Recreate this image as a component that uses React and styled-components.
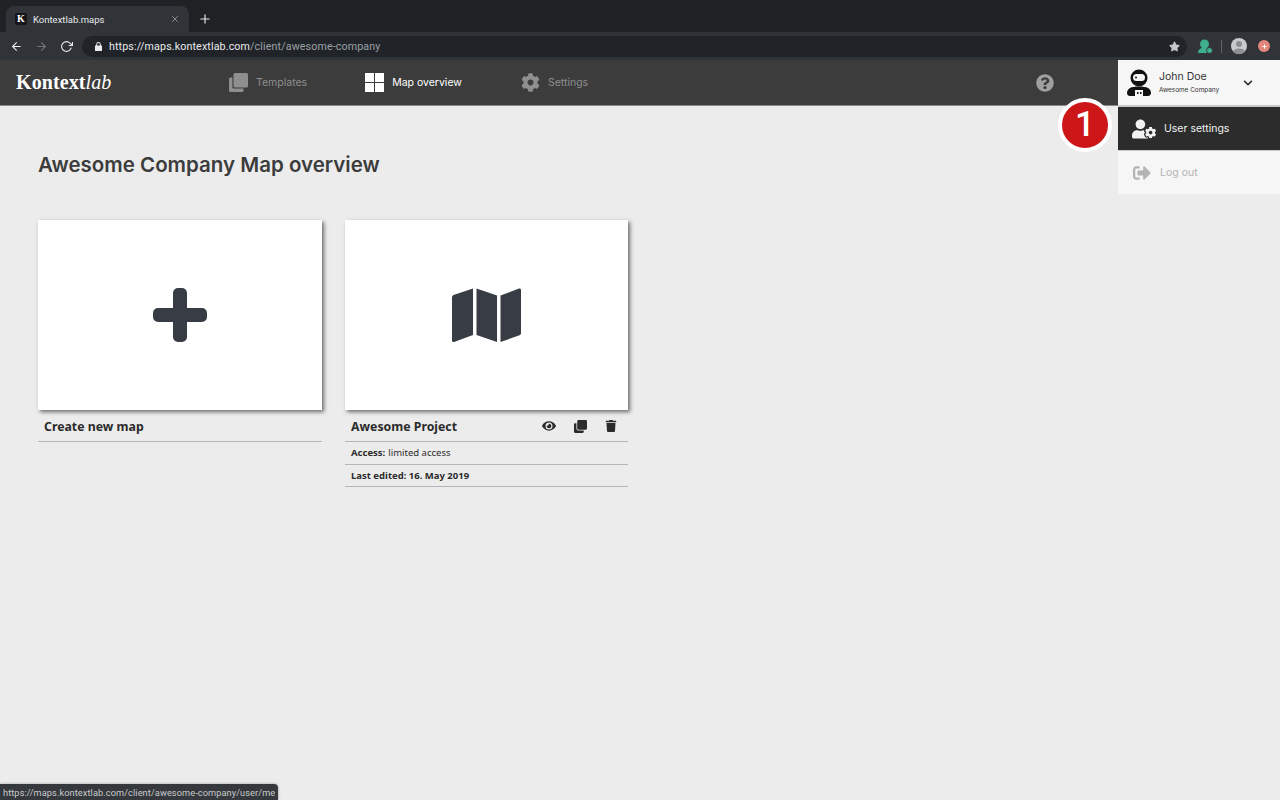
import React from 'react';
import styled, { createGlobalStyle } from 'styled-components';
import { FaCog, FaQuestionCircle, FaEye, FaTrash, FaUserCog, FaSignOutAlt, FaChevronDown, FaClone, FaStar, FaPlus } from 'react-icons/fa';
import { FiArrowLeft, FiArrowRight, FiRotateCw, FiPlus, FiX } from 'react-icons/fi';

const Global = createGlobalStyle`
  html, body {
    margin: 0;
    height: 100%;
    overflow: hidden;
    background: #ececec;
    font-family: Inter, Roboto, sans-serif;
  }
  #root { height: 100%; }
`;

const Page = styled.div`
  position: relative;
  width: 1280px;
  height: 800px;
  overflow: hidden;
  display: flex;
  flex-direction: column;
`;

const TabStrip = styled.div`
  height: 32px;
  background: #202124;
  display: flex;
  align-items: flex-end;
  padding-left: 6px;
  box-sizing: border-box;
`;

const Tab = styled.div`
  width: 183px;
  height: 26px;
  background: #303438;
  border-radius: 8px 8px 0 0;
  display: flex;
  align-items: center;
  padding: 0 9px;
  box-sizing: border-box;
  color: #e8eaed;
  font-size: 9px;
  font-family: Roboto, sans-serif;
`;

const Favicon = styled.span`
  width: 12px;
  height: 12px;
  border-radius: 2px;
  background: #15151a;
  color: #fff;
  font: bold 10px/12px "Liberation Serif", serif;
  text-align: center;
  margin-right: 6px;
`;

const TabTitle = styled.span`
  flex: 1;
  font-size: 9.5px;
`;

const NewTab = styled.div`
  color: #e8eaed;
  display: flex;
  align-items: center;
  height: 26px;
  margin-left: 9px;
  font-size: 13px;
`;

const Toolbar = styled.div`
  height: 28px;
  background: #303438;
  display: flex;
  align-items: center;
  box-sizing: border-box;
  padding-left: 10px;
  color: #e8eaed;
`;

const NavButton = styled.span`
  display: flex;
  width: 25px;
  font-size: 13px;
  color: ${(props) => (props.dim ? '#70757a' : '#e8eaed')};
`;

const AddressBar = styled.div`
  width: 1105px;
  height: 21px;
  margin-left: -3px;
  border-radius: 11px;
  background: #202428;
  display: flex;
  align-items: center;
  padding: 0 7px 0 13px;
  box-sizing: border-box;
  font-family: Roboto, sans-serif;
  font-size: 10.7px;
  letter-spacing: 0.12px;
  color: #9aa0a6;
`;

const Lock = styled.svg`
  width: 7px;
  height: 9px;
  margin-right: 7px;
`;

const Host = styled.span`
  color: #e8eaed;
`;

const StarSlot = styled.span`
  margin-left: auto;
  display: flex;
`;

const Extensions = styled.div`
  display: flex;
  align-items: center;
  margin-left: 11px;
`;

const ExtDivider = styled.span`
  width: 1px;
  height: 13px;
  background: #5f6368;
  margin: 0 9px 0 8px;
`;

const Avatar = styled.span`
  width: 16px;
  height: 16px;
  border-radius: 50%;
  background: #c8cacc;
  display: flex;
  overflow: hidden;
`;

const UpdateDot = styled.span`
  width: 12px;
  height: 12px;
  border-radius: 50%;
  background: #e2857b;
  margin-left: 11px;
  display: flex;
  align-items: center;
  justify-content: center;
`;

const AppBar = styled.header`
  height: 46px;
  background: #3c3c3c;
  border-bottom: 1px solid #8b8b8b;
  box-sizing: border-box;
  display: flex;
  align-items: center;
  padding-left: 16px;
`;

const Logo = styled.div`
  width: 213px;
  color: #fff;
  font: bold 20px "Liberation Serif", serif;
  letter-spacing: 0.1px;
  em {
    font-weight: normal;
  }
`;

const NavItem = styled.div`
  display: flex;
  align-items: center;
  gap: 8px;
  margin-right: ${(props) => props.gap}px;
  font-size: 10.5px;
  color: ${(props) => (props.active ? '#fff' : '#8f8f8f')};
  svg {
    width: 19px;
    height: 19px;
  }
`;

const HelpIcon = styled(FaQuestionCircle)`
  width: 18px;
  height: 18px;
  color: #a0a0a0;
  margin-left: 448px;
`;

const Menu = styled.div`
  position: absolute;
  top: 60px;
  right: 0;
  width: 162px;
  display: flex;
  flex-direction: column;
`;

const MenuUser = styled.div`
  height: 45px;
  background: #f6f6f6;
  display: flex;
  align-items: center;
  padding-left: 9px;
  border-bottom: 2px solid #c9c9c9;
`;

const UserText = styled.div`
  margin-left: 8px;
  width: 84px;
  color: #333;
`;

const UserName = styled.div`
  font-size: 10.5px;
  line-height: 13px;
  margin-bottom: 3px;
`;

const UserCompany = styled.div`
  font-size: 6.4px;
  line-height: 9px;
`;

const MenuRow = styled.div`
  height: ${(props) => (props.dark ? 43 : 43)}px;
  background: ${(props) => (props.dark ? '#2c2c2c' : '#f6f6f6')};
  color: ${(props) => (props.dark ? '#f2f2f2' : '#b4b4b4')};
  border-bottom: ${(props) => (props.dark ? '1px solid #c9c9c9' : 'none')};
  display: flex;
  align-items: center;
  padding-left: ${(props) => (props.dark ? 14 : 15)}px;
  gap: ${(props) => (props.dark ? 8 : 9)}px;
  font-size: 10.5px;
`;

const Badge = styled.div`
  position: absolute;
  left: 1058px;
  top: 98px;
  width: 46px;
  height: 46px;
  border: 4px solid #fff;
  border-radius: 50%;
  background: #cc1618;
  color: #fff;
  font: 500 35px/46px Roboto, sans-serif;
  text-align: center;
`;

const Main = styled.main`
  flex: 1;
  background: #ececec;
  padding: 46px 38px 0;
`;

const Heading = styled.h1`
  margin: 0 0 43px;
  height: 25px;
  font-size: 20.5px;
  line-height: 25px;
  font-weight: 600;
  color: #3c3c3c;
`;

const Cards = styled.div`
  display: flex;
  gap: 23px;
`;

const Card = styled.section`
  width: ${(props) => props.width}px;
`;

const Tile = styled.div`
  height: 190px;
  background: #fff;
  box-shadow: 2px 2px 4px rgba(0, 0, 0, 0.55);
  display: flex;
  align-items: center;
  justify-content: center;
  color: #383c45;
`;

const CardTitle = styled.div`
  height: 31px;
  padding: 0 6px;
  box-sizing: border-box;
  border-bottom: 1px solid #b5b5b5;
  display: flex;
  align-items: center;
  font-family: "Noto Sans", sans-serif;
  font-weight: 700;
  font-size: 12.3px;
  color: #2b2b2b;
  margin-top: 1px;
`;

const CardActions = styled.div`
  margin-left: auto;
  display: flex;
  align-items: center;
  gap: 18px;
  padding-right: 5px;
  font-size: 13px;
`;

const CardMeta = styled.div`
  height: 22.5px;
  padding: 0 6px;
  box-sizing: border-box;
  border-bottom: 1px solid #b5b5b5;
  display: flex;
  align-items: center;
  font-family: "Noto Sans", sans-serif;
  font-size: 9.5px;
  color: #2b2b2b;
  b {
    margin-right: 3px;
  }
`;

const StatusBubble = styled.div`
  position: absolute;
  left: 0;
  bottom: 0;
  height: 16px;
  padding: 0 3px;
  background: #35383c;
  border-top-right-radius: 4px;
  color: #c8cbce;
  font: 9.2px/17px Roboto, sans-serif;
  letter-spacing: 0.1px;
  box-shadow: 0 0 3px rgba(0, 0, 0, 0.35);
`;

const TilesIcon = () => (
  <svg viewBox="0 0 19 19" fill="currentColor">
    <rect x="0" y="0" width="9" height="9" />
    <rect x="10" y="0" width="9" height="9" />
    <rect x="0" y="10" width="9" height="9" />
    <rect x="10" y="10" width="9" height="9" />
  </svg>
);

const PagesIcon = () => (
  <svg viewBox="0 0 19 19" fill="currentColor">
    <path d="M6 0h11.5A1.5 1.5 0 0 1 19 1.500V13a1.500 1.500 0 0 1-1.500 1.500H6A1.500 1.500 0 0 1 4.500 13V1.500A1.500 1.500 0 0 1 6 0z" />
    <path d="M3.400 4.500V14c0 .9.7 1.600 1.600 1.600h9.500v1.900A1.500 1.500 0 0 1 13 19H1.500A1.500 1.500 0 0 1 0 17.500V6a1.500 1.500 0 0 1 1.500-1.500z" />
  </svg>
);

const MapIcon = () => (
  <svg width="69" height="54" viewBox="0 0 69 54" fill="currentColor">
    <path d="M21 0.500V47L2 54c-1 .3-2-.3-2-1.500V9.500C0 8.300.6 7.400 1.500 7z" />
    <path d="M24.500 0.500L45 7.500V54L24.500 47z" />
    <path d="M48.500 7.500L67 0.500c1-.4 2 .3 2 1.500v43c0 1.100-.6 2-1.500 2.300L48.500 54z" />
  </svg>
);

const PlusIcon = () => (
  <svg width="54" height="54" viewBox="0 0 54 54" fill="currentColor">
    <path d="M20 5a5 5 0 0 1 5-5h4a5 5 0 0 1 5 5v15h15a5 5 0 0 1 5 5v4a5 5 0 0 1-5 5H34v15a5 5 0 0 1-5 5h-4a5 5 0 0 1-5-5V34H5a5 5 0 0 1-5-5v-4a5 5 0 0 1 5-5h15z" />
  </svg>
);

const AstronautIcon = () => (
  <svg width="24" height="28" viewBox="0 0 24 28">
    <circle cx="12" cy="9" r="8.500" fill="#111" />
    <rect x="6" y="5" width="12" height="7" rx="3.500" fill="#f6f6f6" />
    <circle cx="9" cy="8.500" r="1" fill="#111" />
    <path d="M3 19c3-2 15-2 18 0 2 1 3 3 3 5 0 2-1.500 3-3 3H3c-1.500 0-3-1-3-3 0-2 1-4 3-5z" fill="#111" />
    <rect x="8" y="21" width="8" height="7" fill="#f6f6f6" />
    <rect x="10" y="23" width="1.500" height="2" fill="#111" />
    <rect x="13" y="23" width="1.500" height="2" fill="#111" />
  </svg>
);

const ExtIcon = () => (
  <svg width="15" height="15" viewBox="0 0 15 15" fill="#3fae8c">
    <circle cx="6.500" cy="5" r="4.500" />
    <path d="M0 14c0-3 2-5 5-5h4v5z" />
    <circle cx="11.500" cy="11.500" r="3" stroke="#303438" />
  </svg>
);

const ProfileIcon = () => (
  <svg viewBox="0 0 16 16" width="16" height="16" fill="#fff">
    <circle cx="8" cy="6" r="3" fill="#8d8f92" />
    <ellipse cx="8" cy="14" rx="6" ry="3.500" fill="#8d8f92" />
  </svg>
);

export default function App() {
  return (
    <Page>
      <Global />
      <TabStrip>
        <Tab>
          <Favicon>K</Favicon>
          <TabTitle>Kontextlab.maps</TabTitle>
          <FiX size={10} color="#9aa0a6" />
        </Tab>
        <NewTab><FiPlus size={14} /></NewTab>
      </TabStrip>
      <Toolbar>
        <NavButton><FiArrowLeft /></NavButton>
        <NavButton dim><FiArrowRight /></NavButton>
        <NavButton><FiRotateCw /></NavButton>
        <AddressBar>
          <Lock viewBox="0 0 7 9" fill="#e8eaed">
            <path d="M1.200 3.500V2.300a2.300 2.300 0 0 1 4.600 0v1.200H7V9H0V3.500zm1 0h2.600V2.300a1.300 1.300 0 0 0-2.600 0z" />
          </Lock>
          <span><Host>https://maps.kontextlab.com</Host>/client/awesome-company</span>
          <StarSlot><FaStar size={11} color="#c5c8cb" /></StarSlot>
        </AddressBar>
        <Extensions>
          <ExtIcon />
          <ExtDivider />
          <Avatar><ProfileIcon /></Avatar>
          <UpdateDot><FaPlus size={5} color="#fff" /></UpdateDot>
        </Extensions>
      </Toolbar>
      <AppBar>
        <Logo>Kontext<em><i>lab</i></em></Logo>
        <NavItem gap={58}><PagesIcon />Templates</NavItem>
        <NavItem active gap={59}><TilesIcon />Map overview</NavItem>
        <NavItem><FaCog />Settings</NavItem>
        <HelpIcon />
      </AppBar>
      <Main>
        <Heading>Awesome Company Map overview</Heading>
        <Cards>
          <Card width={284}>
            <Tile><PlusIcon /></Tile>
            <CardTitle>Create new map</CardTitle>
          </Card>
          <Card width={283}>
            <Tile><MapIcon /></Tile>
            <CardTitle>
              Awesome Project
              <CardActions>
                <FaEye size={14} />
                <FaClone size={13} />
                <FaTrash size={12} />
              </CardActions>
            </CardTitle>
            <CardMeta><b>Access:</b> limited access</CardMeta>
            <CardMeta><b>Last edited: 16. May 2019</b></CardMeta>
          </Card>
        </Cards>
      </Main>
      <Menu>
        <MenuUser>
          <AstronautIcon />
          <UserText>
            <UserName>John Doe</UserName>
            <UserCompany>Awesome Company</UserCompany>
          </UserText>
          <FaChevronDown size={10} color="#333" />
        </MenuUser>
        <MenuRow dark><FaUserCog size={24} />User settings</MenuRow>
        <MenuRow><FaSignOutAlt size={18} />Log out</MenuRow>
      </Menu>
      <Badge>1</Badge>
      <StatusBubble>https://maps.kontextlab.com/client/awesome-company/user/me</StatusBubble>
    </Page>
  );
}
